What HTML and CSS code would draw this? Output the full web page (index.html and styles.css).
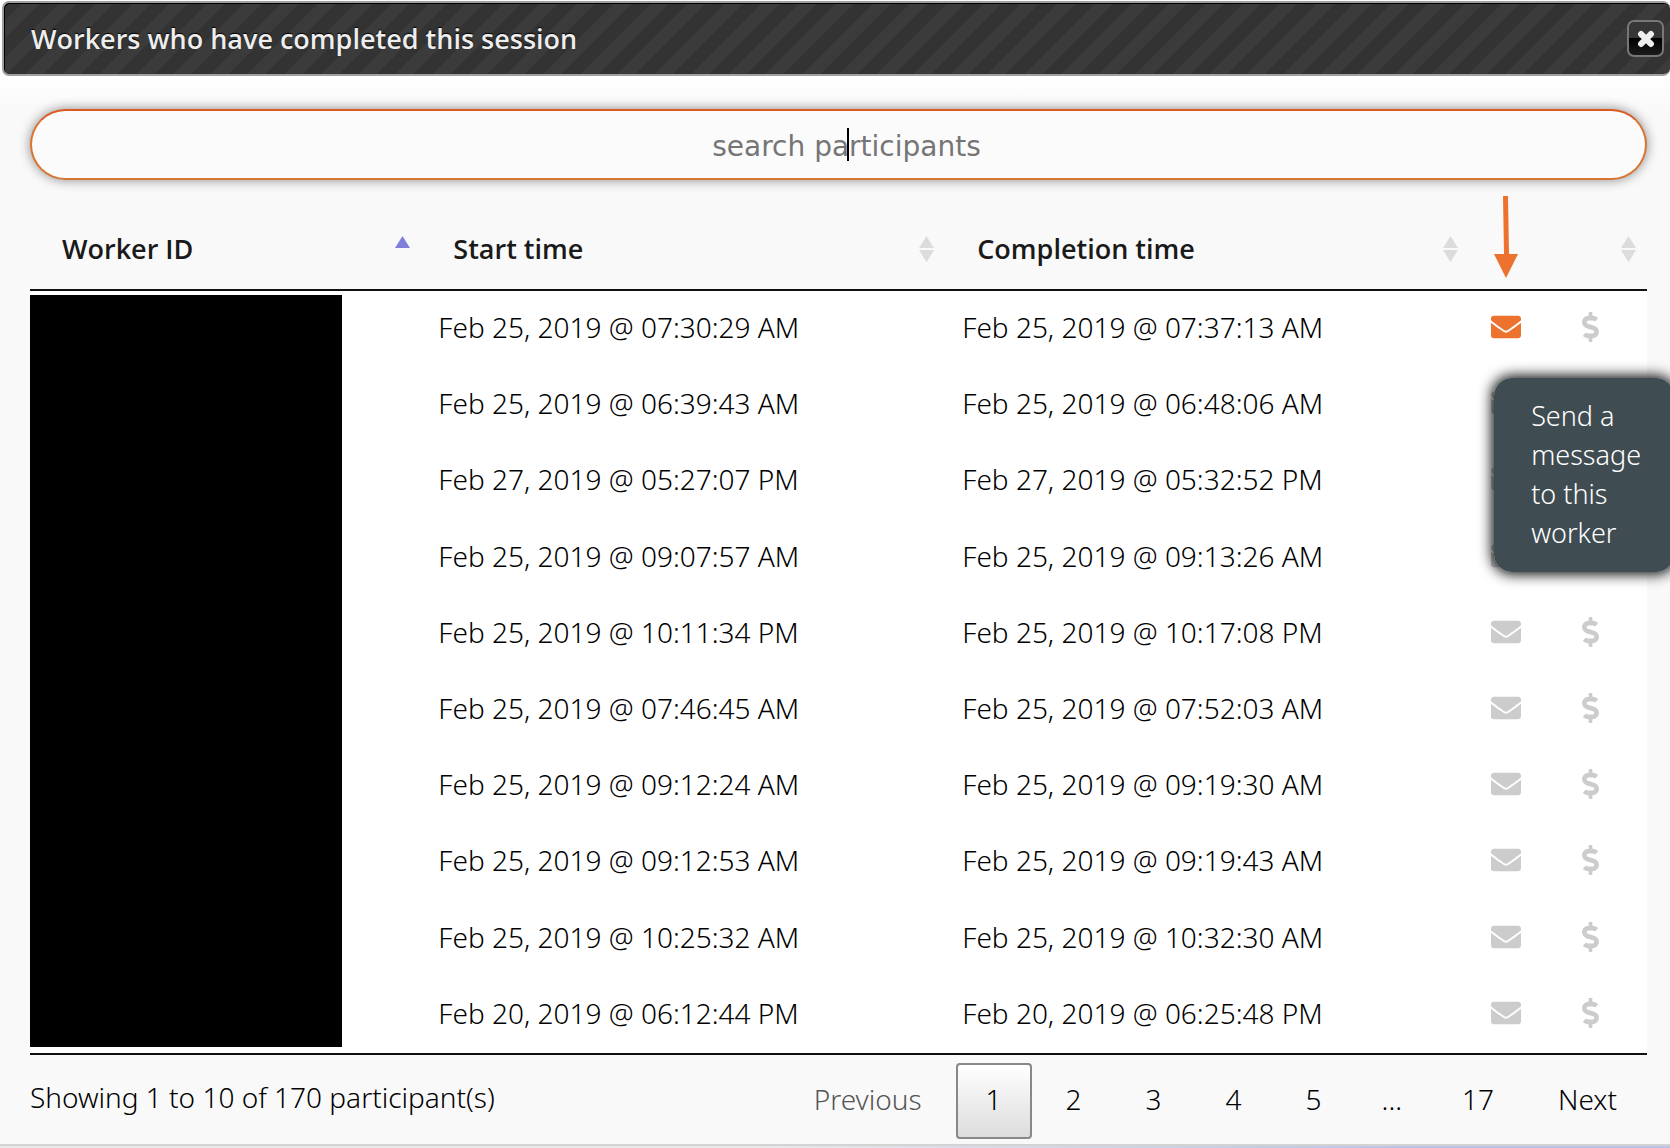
FILE: index.html
```html
<!DOCTYPE html>
<html lang="en">
<head>
    <meta charset="UTF-8">
    <meta name="viewport" content="width=device-width, initial-scale=1.0">
    <title>Workers who have completed this session</title>
    <link rel="stylesheet" href="styles.css">
</head>
<body>
    <svg class="sprite" aria-hidden="true">
        <symbol id="mail" viewBox="0 64 512 384">
            <path d="M502.3 190.8c3.9-3.1 9.7-.2 9.7 4.7V400c0 26.5-21.5 48-48 48H48c-26.5 0-48-21.5-48-48V195.6c0-5 5.7-7.8 9.7-4.7 22.4 17.4 52.1 39.5 154.1 113.6 21.1 15.4 56.7 47.8 92.2 47.6 35.7.3 72-32.8 92.3-47.6 102-74.1 131.6-96.3 154-113.7zM256 320c23.2.4 56.6-29.2 73.4-41.4 132.7-96.3 142.8-104.7 173.4-128.7 5.8-4.5 9.2-11.5 9.2-18.9v-19c0-26.5-21.5-48-48-48H48c-26.5 0-48 21.5-48 48v19c0 7.4 3.4 14.3 9.2 18.9 30.6 23.9 40.7 32.4 173.4 128.7 16.8 12.2 50.2 41.8 73.4 41.4z"/>
        </symbol>
        <symbol id="dollar" viewBox="0 0 288 512">
            <path d="M209.2 233.4l-108-31.6C88.7 198.2 80 186.5 80 173.5c0-16.3 13.2-29.5 29.5-29.5h66.3c12.2 0 24.2 3.7 34.2 10.5 6.1 4.1 14.3 3.1 19.5-2l34.8-34c7.1-6.9 6.1-18.4-1.8-24.5C238 74.8 207.4 64.1 176 64V16c0-8.8-7.2-16-16-16h-32c-8.8 0-16 7.2-16 16v48h-2.5C45.8 64-5.4 118.7.5 183.6c4.2 46.1 39.4 83.6 83.8 96.6l102.5 30c12.5 3.7 21.2 15.3 21.2 28.3 0 16.3-13.2 29.5-29.5 29.5h-66.3C100 368 88 364.3 78 357.5c-6.1-4.1-14.3-3.1-19.5 2l-34.8 34c-7.1 6.9-6.1 18.4 1.8 24.5 24.5 19.2 55.1 29.9 86.5 30v48c0 8.8 7.2 16 16 16h32c8.8 0 16-7.2 16-16v-48.2c46.6-.9 90.3-28.6 105.7-72.7 21.5-61.6-14.6-124.8-72.5-141.7z"/>
        </symbol>
        <symbol id="sort" viewBox="0 0 16 28">
            <path d="M8 0l8 13H0zM0 15h16l-8 13z"/>
        </symbol>
    </svg>

    <div class="dialog">
        <div class="titlebar">
            <h1>Workers who have completed this session</h1>
            <button type="button" class="close" aria-label="Close">
                <svg viewBox="0 0 18 18"><path d="M5 5l8 8M13 5l-8 8"/></svg>
            </button>
        </div>

        <div class="content">
            <div class="search">
                <input type="text" aria-label="search participants" placeholder="search participants">
                <span class="caret"></span>
            </div>

            <table class="workers">
                <colgroup>
                    <col class="col-id">
                    <col class="col-time">
                    <col class="col-time">
                    <col class="col-actions">
                </colgroup>
                <thead>
                    <tr>
                        <th><div class="head">Worker ID <svg class="sorted" viewBox="0 0 16 28"><path d="M8 0l8 13H0z"/></svg></div></th>
                        <th><div class="head">Start time <svg><use href="#sort"/></svg></div></th>
                        <th><div class="head">Completion time <svg><use href="#sort"/></svg></div></th>
                        <th>
                            <svg class="arrow" viewBox="0 0 26 84"><path d="M10 1h5l1 58h9L13 83 1 59h10z"/></svg>
                            <div class="head"><span></span><svg><use href="#sort"/></svg></div>
                        </th>
                    </tr>
                </thead>
                <tbody>
                    <tr>
                        <td class="redacted" rowspan="10"></td>
                        <td>Feb 25, 2019 @ 07:30:29 AM</td>
                        <td>Feb 25, 2019 @ 07:37:13 AM</td>
                        <td>
                            <div class="actions">
                                <button type="button" class="mail active" aria-label="Message" aria-describedby="tip"><svg><use href="#mail"/></svg></button>
                                <button type="button" class="bonus" aria-label="Bonus"><svg><use href="#dollar"/></svg></button>
                                <div class="tooltip" id="tip" role="tooltip">Send a message to this worker</div>
                            </div>
                        </td>
                    </tr>
                    <tr>
                        <td>Feb 25, 2019 @ 06:39:43 AM</td>
                        <td>Feb 25, 2019 @ 06:48:06 AM</td>
                        <td><div class="actions"><button type="button" class="mail" aria-label="Message"><svg><use href="#mail"/></svg></button><button type="button" class="bonus" aria-label="Bonus"><svg><use href="#dollar"/></svg></button></div></td>
                    </tr>
                    <tr>
                        <td>Feb 27, 2019 @ 05:27:07 PM</td>
                        <td>Feb 27, 2019 @ 05:32:52 PM</td>
                        <td><div class="actions"><button type="button" class="mail" aria-label="Message"><svg><use href="#mail"/></svg></button><button type="button" class="bonus" aria-label="Bonus"><svg><use href="#dollar"/></svg></button></div></td>
                    </tr>
                    <tr>
                        <td>Feb 25, 2019 @ 09:07:57 AM</td>
                        <td>Feb 25, 2019 @ 09:13:26 AM</td>
                        <td><div class="actions"><button type="button" class="mail" aria-label="Message"><svg><use href="#mail"/></svg></button><button type="button" class="bonus" aria-label="Bonus"><svg><use href="#dollar"/></svg></button></div></td>
                    </tr>
                    <tr>
                        <td>Feb 25, 2019 @ 10:11:34 PM</td>
                        <td>Feb 25, 2019 @ 10:17:08 PM</td>
                        <td><div class="actions"><button type="button" class="mail" aria-label="Message"><svg><use href="#mail"/></svg></button><button type="button" class="bonus" aria-label="Bonus"><svg><use href="#dollar"/></svg></button></div></td>
                    </tr>
                    <tr>
                        <td>Feb 25, 2019 @ 07:46:45 AM</td>
                        <td>Feb 25, 2019 @ 07:52:03 AM</td>
                        <td><div class="actions"><button type="button" class="mail" aria-label="Message"><svg><use href="#mail"/></svg></button><button type="button" class="bonus" aria-label="Bonus"><svg><use href="#dollar"/></svg></button></div></td>
                    </tr>
                    <tr>
                        <td>Feb 25, 2019 @ 09:12:24 AM</td>
                        <td>Feb 25, 2019 @ 09:19:30 AM</td>
                        <td><div class="actions"><button type="button" class="mail" aria-label="Message"><svg><use href="#mail"/></svg></button><button type="button" class="bonus" aria-label="Bonus"><svg><use href="#dollar"/></svg></button></div></td>
                    </tr>
                    <tr>
                        <td>Feb 25, 2019 @ 09:12:53 AM</td>
                        <td>Feb 25, 2019 @ 09:19:43 AM</td>
                        <td><div class="actions"><button type="button" class="mail" aria-label="Message"><svg><use href="#mail"/></svg></button><button type="button" class="bonus" aria-label="Bonus"><svg><use href="#dollar"/></svg></button></div></td>
                    </tr>
                    <tr>
                        <td>Feb 25, 2019 @ 10:25:32 AM</td>
                        <td>Feb 25, 2019 @ 10:32:30 AM</td>
                        <td><div class="actions"><button type="button" class="mail" aria-label="Message"><svg><use href="#mail"/></svg></button><button type="button" class="bonus" aria-label="Bonus"><svg><use href="#dollar"/></svg></button></div></td>
                    </tr>
                    <tr>
                        <td>Feb 20, 2019 @ 06:12:44 PM</td>
                        <td>Feb 20, 2019 @ 06:25:48 PM</td>
                        <td><div class="actions"><button type="button" class="mail" aria-label="Message"><svg><use href="#mail"/></svg></button><button type="button" class="bonus" aria-label="Bonus"><svg><use href="#dollar"/></svg></button></div></td>
                    </tr>
                </tbody>
            </table>

            <div class="footer">
                <div class="info">Showing 1 to 10 of 170 participant(s)</div>
                <nav class="pages">
                    <button type="button" class="page" disabled>Previous</button>
                    <button type="button" class="page current">1</button>
                    <button type="button" class="page">2</button>
                    <button type="button" class="page">3</button>
                    <button type="button" class="page">4</button>
                    <button type="button" class="page">5</button>
                    <span class="page ellipsis">...</span>
                    <button type="button" class="page">17</button>
                    <button type="button" class="page">Next</button>
                </nav>
            </div>
        </div>
    </div>
</body>
</html>
```
FILE: styles.css
```css
* {
    box-sizing: border-box;
}

body {
    margin: 0;
    overflow-x: hidden;
    font-family: "Noto Sans", sans-serif;
    font-size: 28px;
    font-weight: 300;
    line-height: 40px;
    color: #000;
    background: linear-gradient(90deg, #e9e9ea 45%, #b9c3e4 85%);
}

button {
    padding: 0;
    border: 0;
    background: none;
    font: inherit;
    color: inherit;
    cursor: pointer;
}

.sprite {
    position: absolute;
    width: 0;
    height: 0;
}

.dialog {
    padding-top: 1px;
    background: linear-gradient(#fff 76px, #f9f9f9 110px);
    border-bottom: 2px solid #d3d3d3;
}

/* title bar */
.titlebar {
    display: flex;
    align-items: center;
    justify-content: space-between;
    height: 75px;
    margin-left: 2px;
    padding: 0 6px 0 27px;
    border: 2px solid #a0a0a0;
    border-right: 0;
    border-radius: 7px;
    background: linear-gradient(135deg, #333 25%, #3b3b3b 25%, #3b3b3b 50%, #333 50%, #333 75%, #3b3b3b 75%) 0 0 / 37px 37px;
    box-shadow: inset 1px 1px 0 #000;
}

.titlebar h1 {
    margin: 0;
    font-family: "Open Sans", sans-serif;
    font-size: 27px;
    font-weight: 600;
    color: #eee;
    text-shadow: 0 -1px 1px #000;
}

.close {
    display: flex;
    align-items: center;
    justify-content: center;
    width: 37px;
    height: 37px;
    border: 2px solid #777;
    border-radius: 7px;
    background: linear-gradient(#363636 50%, #000 50%, #1c1c1c);
}

.close svg {
    width: 22px;
    height: 22px;
    fill: none;
    stroke: #eee;
    stroke-width: 5;
    stroke-linecap: round;
}

.content {
    padding: 33px 23px 5px 30px;
}

/* search */
.search {
    position: relative;
}

.search input {
    display: block;
    width: 100%;
    height: 71px;
    padding: 4px 0 0 16px;
    border: 2px solid #d97432;
    border-top-color: #dc5a22;
    border-radius: 36px;
    outline: 0;
    background: #fbfbfb;
    font-family: "DejaVu Sans", sans-serif;
    font-size: 28px;
    text-align: center;
    box-shadow: 0 0 12px rgba(0, 0, 0, .45);
}

.search input::placeholder {
    color: #757575;
}

.caret {
    position: absolute;
    top: 19px;
    left: calc(50% + 8px);
    width: 2px;
    height: 33px;
    background: #000;
}

/* table */
.workers {
    width: 100%;
    margin-top: 32px;
    table-layout: fixed;
    border-collapse: separate;
    border-spacing: 0;
    border-bottom: 2px solid #111;
}

.col-id {
    width: 24.2%;
}

.col-time {
    width: 32.4%;
}

.col-actions {
    width: 11%;
}

.workers th {
    position: relative;
    height: 79px;
    padding: 0 11px 4px 32px;
    border-bottom: 2px solid #111;
    font-family: "Open Sans", sans-serif;
    font-size: 27px;
    font-weight: 600;
    text-align: left;
    color: #1a1a1a;
}

.head {
    display: flex;
    align-items: center;
    justify-content: space-between;
}

.head svg {
    width: 15px;
    height: 28px;
    fill: #dcdcdc;
}

.head .sorted {
    fill: #8080dc;
}

.arrow {
    position: absolute;
    top: -17px;
    left: 24px;
    width: 26px;
    height: 84px;
    fill: #ec722e;
}

.workers td {
    height: 76px;
    padding: 0 0 4px 17px;
    background: #fff;
}

.workers .redacted {
    height: 762px;
    border: 4px solid #fff;
    border-width: 4px 79px 6px 0;
    background: #000;
}

.actions {
    position: relative;
    display: flex;
    align-items: center;
    gap: 61px;
    padding-left: 5px;
    color: #ccc;
}

.actions svg {
    display: block;
    fill: currentColor;
}

.mail svg {
    width: 30px;
    height: 24px;
}

.mail.active {
    color: #ec722e;
}

.bonus svg {
    width: 17px;
    height: 30px;
}

.tooltip {
    position: absolute;
    z-index: 1;
    top: 66px;
    left: 8px;
    width: 180px;
    padding: 18px 20px 20px 37px;
    border-radius: 18px;
    background: rgba(61, 74, 80, .99);
    color: #fff;
    font-size: 27px;
    line-height: 39px;
    box-shadow: 0 0 14px 2px #000;
}

/* info and paging */
.footer {
    display: flex;
    align-items: center;
    justify-content: space-between;
    padding-top: 8px;
}

.info {
    padding-bottom: 8px;
}

.pages {
    display: flex;
    gap: 4px;
}

.page {
    height: 76px;
    padding: 0 29px 4px;
    border: 1px solid transparent;
    border-radius: 4px;
    line-height: 70px;
}

.page:disabled {
    color: #555;
    cursor: default;
}

.page.current {
    border: 2px solid #888;
    padding: 0 28px 4px;
    background: linear-gradient(#fff, #dcdcdc);
    line-height: 68px;
}

.page.ellipsis {
    padding: 0 25px;
}
```
